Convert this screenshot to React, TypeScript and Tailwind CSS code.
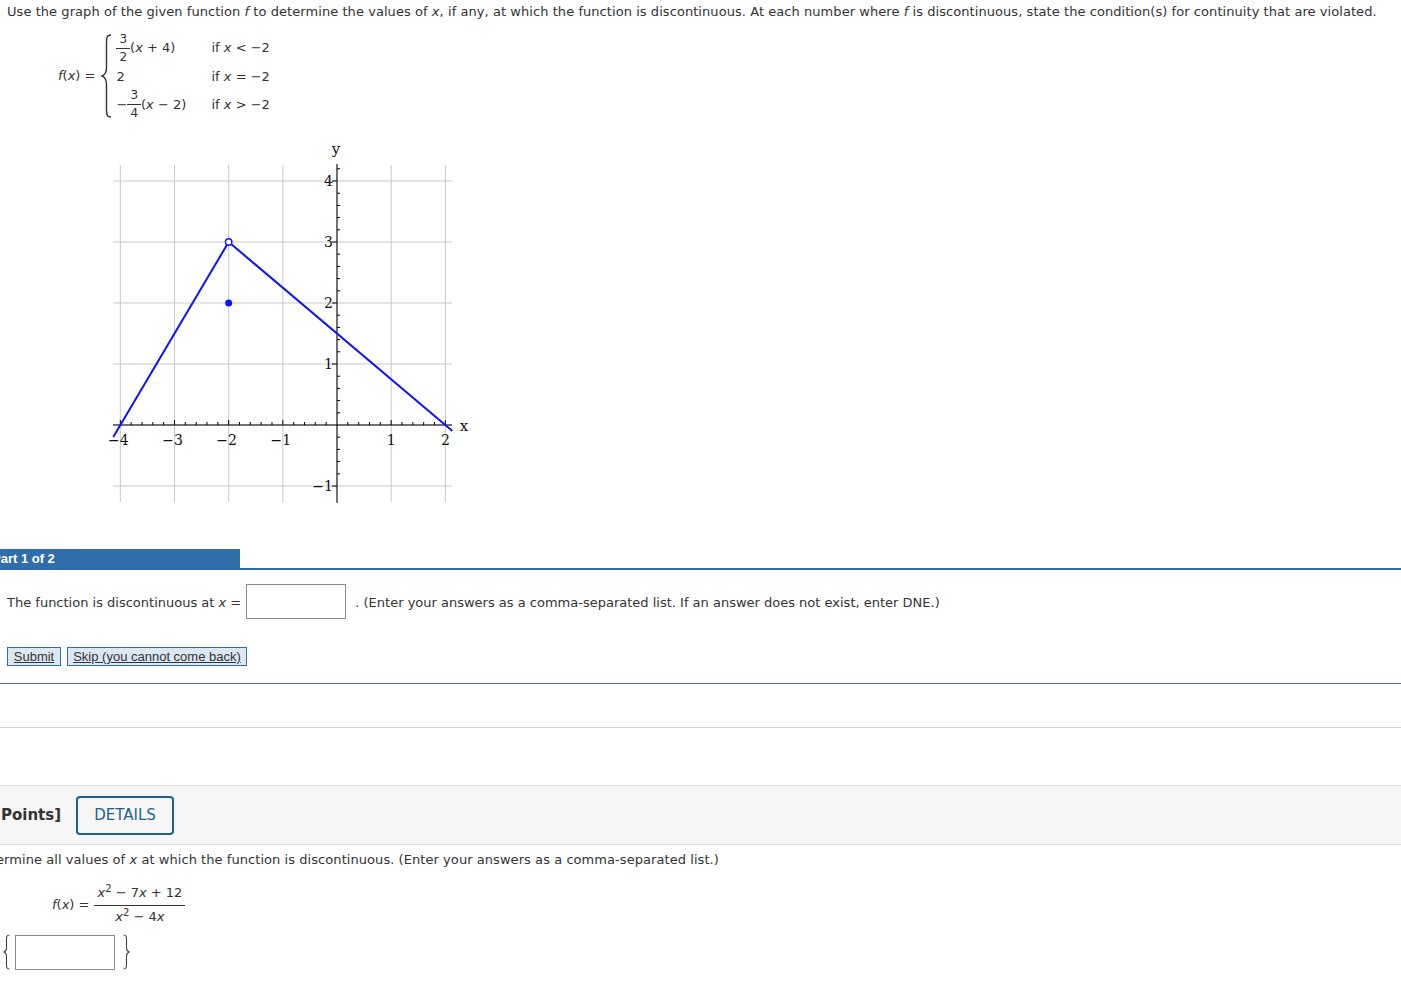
import React from 'react'

const X = (u: number) => 337 + 54.17 * u
const Y = (v: number) => 425 - 61 * v

function Graph() {
  const xs = [-4, -3, -2, -1, 0, 1, 2]
  const ys = [-1, 0, 1, 2, 3, 4]
  const minorX: number[] = []
  for (let i = -20; i <= 10; i++) if (i % 5 !== 0) minorX.push(i / 5)
  const minorY: number[] = []
  for (let i = -5; i <= 21; i++) if (i % 5 !== 0) minorY.push(i / 5)

  return (
    <svg width="370" height="372" viewBox="105 138 370 372" className="ml-[105px] block">
      {xs.map(u => (
        <line key={'gx' + u} x1={X(u)} x2={X(u)} y1={165} y2={502} stroke="#c9c9c9" strokeWidth="1" />
      ))}
      {ys.map(v => (
        <line key={'gy' + v} x1={113} x2={452} y1={Y(v)} y2={Y(v)} stroke="#c9c9c9" strokeWidth="1" />
      ))}
      <line x1={113} x2={452} y1={425} y2={425} stroke="#000" strokeWidth="1" />
      <line x1={337} x2={337} y1={164} y2={503} stroke="#000" strokeWidth="1" />
      {minorX.map(u => (
        <line key={'mx' + u} x1={X(u)} x2={X(u)} y1={422} y2={425} stroke="#000" strokeWidth="1" />
      ))}
      {xs.filter(u => u !== 0).map(u => (
        <line key={'tx' + u} x1={X(u)} x2={X(u)} y1={420} y2={425} stroke="#000" strokeWidth="1" />
      ))}
      {minorY.map(v => (
        <line key={'my' + v} x1={337} x2={340} y1={Y(v)} y2={Y(v)} stroke="#000" strokeWidth="1" />
      ))}
      {ys.filter(v => v !== 0).map(v => (
        <line key={'ty' + v} x1={332} x2={337} y1={Y(v)} y2={Y(v)} stroke="#000" strokeWidth="1" />
      ))}
      <g fontFamily='"DejaVu Serif", "Liberation Serif", serif' fontSize="14" fill="#111">
        {xs.filter(u => u !== 0).map(u => (
          <text key={'lx' + u} x={X(u) + (u < 0 ? -2 : 0)} y={445} textAnchor="middle">
            {u < 0 ? '\u2212' + -u : u}
          </text>
        ))}
        {ys.filter(v => v !== 0).map(v => (
          <text key={'ly' + v} x={333} y={Y(v) + 5} textAnchor="end">
            {v < 0 ? '\u2212' + -v : v}
          </text>
        ))}
        <text x={336} y={154} textAnchor="middle" fontSize="15">y</text>
        <text x={464} y={431} textAnchor="middle" fontSize="15">x</text>
      </g>
      <line x1={X(-4.13)} y1={Y(-0.195)} x2={X(-2)} y2={Y(3)} stroke="#1010ff" strokeWidth="2" />
      <line x1={X(-2)} y1={Y(3)} x2={X(2.13)} y2={Y(-0.0975)} stroke="#1010ff" strokeWidth="2" />
      <circle cx={X(-2)} cy={Y(3)} r="3.2" fill="#fff" stroke="#1010ff" strokeWidth="1.4" />
      <circle cx={X(-2)} cy={Y(2)} r="3.5" fill="#1010ff" />
    </svg>
  )
}

function Frac({ n, d }: { n: React.ReactNode; d: React.ReactNode }) {
  return (
    <span className="inline-flex flex-col items-center align-middle text-[12px] leading-[13px]">
      <span className="px-[3px] pb-[2px] border-b border-[#333]">{n}</span>
      <span className="px-[3px] pt-[2px]">{d}</span>
    </span>
  )
}

function Brace({ right }: { right?: boolean }) {
  return (
    <svg width="9" height="36" viewBox="0 0 9 36" className={right ? '-scale-x-100' : ''}>
      <path
        d="M7.5,1 C4.5,1 4.5,3 4.5,6 L4.5,14 C4.5,16.5 3.5,17.5 1.5,18 C3.5,18.5 4.5,19.5 4.5,22 L4.5,30 C4.5,33 4.5,35 7.5,35"
        stroke="#444"
        strokeWidth="1.1"
        fill="none"
      />
    </svg>
  )
}

export default function App() {
  return (
    <div
      className="min-h-screen bg-white text-[13px] text-[#333] overflow-hidden"
      style={{ fontFamily: '"DejaVu Sans", Verdana, "Liberation Sans", sans-serif' }}
    >
      <p className="pl-[7px] pt-[4px] leading-[16px] whitespace-nowrap tracking-[0.06px]">
        Use the graph of the given function <i>f</i> to determine the values of <i>x</i>, if any, at which the function is discontinuous. At each number where <i>f</i> is discontinuous, state the condition(s) for continuity that are violated.
      </p>

      <div className="ml-[58px] mt-[14px] flex items-center h-[84px]">
        <span className="whitespace-nowrap">
          <i>f</i>(<i>x</i>) =
        </span>
        <svg width="12" height="84" viewBox="0 0 12 84" className="ml-[6px]">
          <path
            d="M10,1 C5,1 5.5,5 5.5,11 L5.5,33 C5.5,38 4,41 1,42 C4,43 5.5,46 5.5,51 L5.5,73 C5.5,79 5,83 10,83"
            stroke="#333"
            strokeWidth="1.4"
            fill="none"
          />
        </svg>
        <div className="ml-[3px] grid grid-cols-[95px_auto] grid-rows-[28px_29px_27px] items-center">
          <div className="flex items-center whitespace-nowrap">
            <Frac n="3" d="2" />
            <span>
              (<i>x</i> + 4)
            </span>
          </div>
          <div className="whitespace-nowrap">
            if <i>x</i> &lt; −2
          </div>
          <div>2</div>
          <div className="whitespace-nowrap">
            if <i>x</i> = −2
          </div>
          <div className="flex items-center whitespace-nowrap">
            <span>−</span>
            <Frac n="3" d="4" />
            <span>
              (<i>x</i> − 2)
            </span>
          </div>
          <div className="whitespace-nowrap">
            if <i>x</i> &gt; −2
          </div>
        </div>
      </div>

      <div className="mt-[20px]">
        <Graph />
      </div>

      <div className="mt-[39px] border-b-2 border-[#2f6eaa]">
        <div
          className="w-[240px] h-[19px] bg-[#2f6eaa] overflow-hidden text-white font-bold text-[13px] leading-[19px]"
          style={{ fontFamily: '"Liberation Sans", Arial, sans-serif' }}
        >
          <span className="block -ml-[8px] whitespace-nowrap">Part 1 of 2</span>
        </div>
      </div>

      <div className="mt-[14px] pl-[7px] flex items-center whitespace-nowrap">
        <span className="translate-y-[1px]">
          The function is discontinuous at <i>x</i> =
        </span>
        <div className="ml-[5px] w-[100px] h-[35px] border border-[#8a8a8a] bg-white" />
        <span className="ml-[9px] translate-y-[1px]">
          . (Enter your answers as a comma-separated list. If an answer does not exist, enter DNE.)
        </span>
      </div>

      <div
        className="mt-[28px] pl-[7px] flex gap-[6px] text-[13px] leading-[16px]"
        style={{ fontFamily: '"Liberation Sans", Arial, sans-serif' }}
      >
        <button className="h-[19px] w-[54px] border border-[#2f6eaa] bg-[#dde7f2] underline text-[#333]">Submit</button>
        <button className="h-[19px] w-[180px] border border-[#2f6eaa] bg-[#dde7f2] underline text-[#333]">
          Skip (you cannot come back)
        </button>
      </div>

      <div className="mt-[17px] border-b border-[#4a72a0]" />
      <div className="h-[44px] border-b border-[#d2d2d2]" />
      <div className="h-[57px]" />

      <div className="h-[60px] bg-[#f6f6f6] border-t border-b border-[#dedede] flex items-center">
        <span className="ml-[1px] font-bold text-[15px] text-[#333]">Points]</span>
        <button className="ml-[15px] w-[98px] h-[39px] border-2 border-[#1e5f98] rounded-[4px] text-[#1e5f98] text-[15px] bg-[#f6f6f6]">
          DETAILS
        </button>
      </div>

      <p className="mt-[7px] -ml-[4px] leading-[16px] whitespace-nowrap tracking-[0.06px]">
        ermine all values of <i>x</i> at which the function is discontinuous. (Enter your answers as a comma-separated list.)
      </p>

      <div className="ml-[52px] mt-[16px] flex items-center">
        <span className="whitespace-nowrap">
          <i>f</i>(<i>x</i>) =
        </span>
        <span className="ml-[5px] inline-flex flex-col items-center">
          <span className="px-[3px] pb-[3px] border-b border-[#333] whitespace-nowrap leading-[18px]">
            <i>x</i>
            <sup className="text-[10px]">2</sup> − 7<i>x</i> + 12
          </span>
          <span className="pt-[2px] whitespace-nowrap leading-[18px]">
            <i>x</i>
            <sup className="text-[10px]">2</sup> − 4<i>x</i>
          </span>
        </span>
      </div>

      <div className="mt-[8px] ml-[2px] flex items-center">
        <Brace />
        <div className="ml-[4px] w-[100px] h-[35px] border border-[#8a8a8a] bg-white" />
        <div className="ml-[7px]">
          <Brace right />
        </div>
      </div>
    </div>
  )
}
